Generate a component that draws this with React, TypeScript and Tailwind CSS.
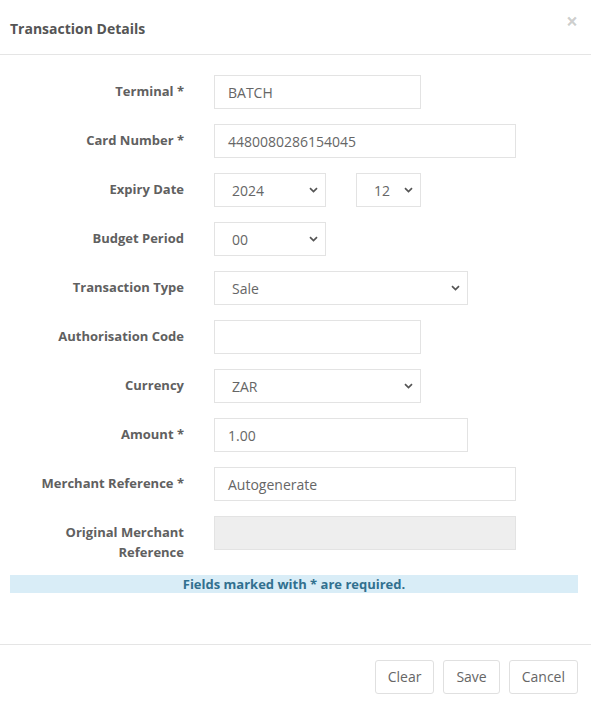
import type { ReactNode } from 'react';

const Chevron = () => (
  <svg
    width="9"
    height="6"
    viewBox="0 0 9 6"
    className="pointer-events-none absolute right-[7px] top-1/2 -translate-y-1/2"
  >
    <path d="M1 1.2 L4.5 4.6 L8 1.2" fill="none" stroke="#555" strokeWidth="1.7" />
  </svg>
);

type RowProps = { label: ReactNode; children: ReactNode; last?: boolean };

const Row = ({ label, children, last }: RowProps) => (
  <div className={`flex items-start ${last ? '' : 'mb-[15px]'}`}>
    <label className="w-[174px] ml-[10px] pt-[6px] text-right text-[13px] font-bold leading-[20px] text-[#606060]">
      {label}
    </label>
    <div className="ml-[30px] flex gap-[30px]">{children}</div>
  </div>
);

const Input = ({ value, width, disabled }: { value?: string; width: string; disabled?: boolean }) => (
  <div
    className={`h-[34px] ${width} border border-[#e3e3e3] px-[13px] text-[14px] leading-[33px] text-[#666] ${
      disabled ? 'bg-[#eeeeee]' : 'bg-white'
    }`}
  >
    {value}
  </div>
);

const Select = ({ value, width }: { value: string; width: string }) => (
  <div
    className={`relative h-[34px] ${width} border border-[#e3e3e3] bg-white pl-[17px] text-[14px] leading-[33px] text-[#666]`}
  >
    {value}
    <Chevron />
  </div>
);

export default function App() {
  return (
    <div className="w-[591px] h-[706px] overflow-hidden bg-white font-['Open_Sans',sans-serif]">
      {/* Header */}
      <div className="flex h-[55px] justify-between border-b border-[#e5e5e5]">
        <h4 className="pl-[10px] pt-[19px] text-[14px] font-bold leading-[20px] text-[#555]">
          Transaction Details
        </h4>
        <span className="mr-[13px] pt-[9px] text-[21px] font-bold leading-[25px] text-black/20">×</span>
      </div>

      {/* Body */}
      <div className="pt-[20px]">
        <Row label="Terminal *">
          <Input value="BATCH" width="w-[207px]" />
        </Row>
        <Row label="Card Number *">
          <Input value="4480080286154045" width="w-[302px]" />
        </Row>
        <Row label="Expiry Date">
          <Select value="2024" width="w-[112px]" />
          <Select value="12" width="w-[65px]" />
        </Row>
        <Row label="Budget Period">
          <Select value="00" width="w-[112px]" />
        </Row>
        <Row label="Transaction Type">
          <Select value="Sale" width="w-[254px]" />
        </Row>
        <Row label="Authorisation Code">
          <Input width="w-[207px]" />
        </Row>
        <Row label="Currency">
          <Select value="ZAR" width="w-[207px]" />
        </Row>
        <Row label="Amount *">
          <Input value="1.00" width="w-[254px]" />
        </Row>
        <Row label="Merchant Reference *">
          <Input value="Autogenerate" width="w-[302px]" />
        </Row>
        <Row
          last
          label={
            <>
              Original Merchant
              <br />
              Reference
            </>
          }
        >
          <Input width="w-[302px]" disabled />
        </Row>

        <div className="mx-[10px] mt-[13px] w-[568px] bg-[#d9edf7] text-center text-[13px] font-bold leading-[18px] text-[#31708f]">
          Fields marked with * are required.
        </div>
      </div>

      {/* Footer */}
      <div className="mt-[51px] flex justify-end gap-[9px] border-t border-[#e5e5e5] pr-[13px] pt-[15px]">
        {['Clear', 'Save', 'Cancel'].map((b) => (
          <button
            key={b}
            className="h-[34px] rounded-[3px] border border-[#e0e0e0] bg-white px-[12px] text-[14px] leading-[32px] text-[#666]"
          >
            {b}
          </button>
        ))}
      </div>
    </div>
  );
}
